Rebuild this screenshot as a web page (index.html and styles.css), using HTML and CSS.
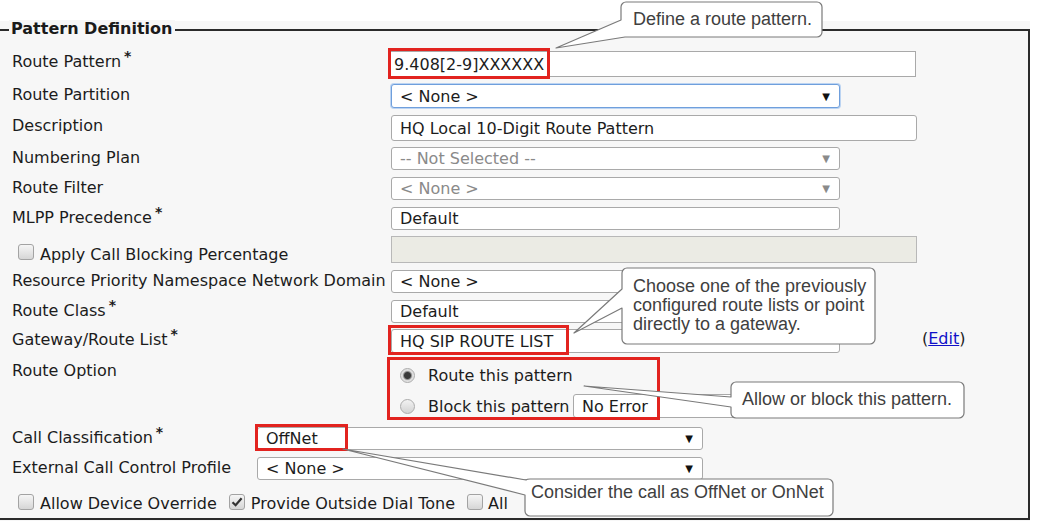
FILE: index.html
```html
<!DOCTYPE html>
<html>
<head>
<meta charset="utf-8">
<link rel="stylesheet" href="styles.css">
</head>
<body>
<div class="page">
  <div class="panel">
    <div class="frame">
      <div class="legend">Pattern Definition</div>
      <div class="form">
        <div class="row h33">
          <div class="label">Route Pattern<span class="req">*</span></div>
          <div class="field wide tall rp">9.408[2-9]XXXXXX</div>
        </div>
        <div class="row h31">
          <div class="label">Route Partition</div>
          <div class="field sel focus h24"><span>&lt; None &gt;</span><span class="arrow">&#9660;</span></div>
        </div>
        <div class="row h32">
          <div class="label">Description</div>
          <div class="field wide tall">HQ Local 10-Digit Route Pattern</div>
        </div>
        <div class="row h30">
          <div class="label">Numbering Plan</div>
          <div class="field sel disabled"><span>-- Not Selected --</span><span class="arrow">&#9660;</span></div>
        </div>
        <div class="row h30">
          <div class="label">Route Filter</div>
          <div class="field sel disabled"><span>&lt; None &gt;</span><span class="arrow">&#9660;</span></div>
        </div>
        <div class="row h29">
          <div class="label">MLPP Precedence<span class="req">*</span></div>
          <div class="field">Default</div>
        </div>
        <div class="row h34">
          <div class="label check-label"><span class="cb"></span><span class="cb-text">Apply Call Blocking Percentage</span></div>
          <div class="field wide h27 inactive"></div>
        </div>
        <div class="row h30">
          <div class="label">Resource Priority Namespace Network Domain</div>
          <div class="field"><span>&lt; None &gt;</span></div>
        </div>
        <div class="row h29">
          <div class="label">Route Class<span class="req">*</span></div>
          <div class="field"><span>Default</span></div>
        </div>
        <div class="row h31">
          <div class="label">Gateway/Route List<span class="req">*</span></div>
          <div class="field h24"><span>HQ SIP ROUTE LIST</span></div>
          <div class="edit">(<a href="#">Edit</a>)</div>
        </div>
        <div class="row h67">
          <div class="label">Route Option</div>
          <div class="options">
            <div class="opt"><span class="radio on"></span><span>Route this pattern</span></div>
            <div class="opt"><span class="radio"></span><span>Block this pattern</span><div class="field noerr h24"><span>No Error</span></div></div>
          </div>
        </div>
        <div class="row h30">
          <div class="label short">Call Classification<span class="req">*</span></div>
          <div class="field sel mid"><span>OffNet</span><span class="arrow">&#9660;</span></div>
        </div>
        <div class="row h31">
          <div class="label short">External Call Control Profile</div>
          <div class="field sel mid"><span>&lt; None &gt;</span><span class="arrow">&#9660;</span></div>
        </div>
        <div class="row checks">
          <span class="cb"></span><span class="cb-text">Allow Device Override</span>
          <span class="cb on"><svg viewBox="0 0 16 16" width="16" height="16"><path d="M3.5 8.2 L6.6 11.2 L12.6 4.2" fill="none" stroke="#333" stroke-width="2.2"/></svg></span><span class="cb-text">Provide Outside Dial Tone</span>
          <span class="cb"></span><span class="cb-text clip">All</span>
        </div>
      </div>
    </div>
  </div>

  <div class="hl hl-rp"></div>
  <div class="hl hl-gw"></div>
  <div class="hl hl-opt"></div>
  <div class="hl hl-cc"></div>

  <svg class="callouts" width="1052" height="521" viewBox="0 0 1052 521">
    <g fill="#ffffff" stroke="#7a7a7a" stroke-width="1.2" stroke-linejoin="round">
      <path d="M626 2 H817 A5 5 0 0 1 822 7 V32 A5 5 0 0 1 817 37 H625 L556 48 L621 20 V7 A5 5 0 0 1 626 2 Z"/>
      <path d="M627 268 H870 A5 5 0 0 1 875 273 V339 A5 5 0 0 1 870 344 H627 A5 5 0 0 1 622 339 V308 L574 333 L622 289 V273 A5 5 0 0 1 627 268 Z"/>
      <path d="M736 382 H959 A5 5 0 0 1 964 387 V413 A5 5 0 0 1 959 418 H736 A5 5 0 0 1 731 413 V407 L584 386 L731 397 V387 A5 5 0 0 1 736 382 Z"/>
      <path d="M530 479 H828 A5 5 0 0 1 833 484 V511 A5 5 0 0 1 828 516 H530 A5 5 0 0 1 525 511 V495 L343 449 L526 480 Q527 479 530 479 Z"/>
    </g>
  </svg>
  <div class="ct ct1">Define a route pattern.</div>
  <div class="ct ct2">Choose one of the previously<br>configured route lists or point<br>directly to a gateway.</div>
  <div class="ct ct3">Allow or block this pattern.</div>
  <div class="ct ct4">Consider the call as OffNet or OnNet</div>
</div>
</body>
</html>
```

FILE: styles.css
```css
html, body {
  margin: 0;
  padding: 0;
  background: #ffffff;
}

.page {
  position: relative;
  width: 1052px;
  height: 521px;
  overflow: hidden;
  font-family: "DejaVu Sans", Verdana, sans-serif;
  font-size: 16px;
  color: #1c1c1c;
}

.panel {
  margin-top: 21px;
  width: 1030px;
  height: 500px;
  padding-top: 8px;
  box-sizing: border-box;
  background: #f7f7f7;
}

.frame {
  position: relative;
  height: 491px;
  box-sizing: border-box;
  border-top: 2px solid #2b2b2b;
  border-right: 2px solid #2b2b2b;
  border-bottom: 2px solid #2b2b2b;
}

.legend {
  position: absolute;
  top: -11px;
  left: 9px;
  padding: 0 3px 0 2px;
  background: #f7f7f7;
  font-weight: bold;
  line-height: 18px;
  color: #1a1a1a;
}

.form {
  padding-top: 17px;
}

.row {
  display: flex;
  align-items: flex-start;
}

.h29 { height: 29px; }
.h30 { height: 30px; }
.h31 { height: 31px; }
.h32 { height: 32px; }
.h33 { height: 33px; }
.h34 { height: 34px; }
.h67 { height: 67px; }

.label {
  flex: 0 0 391px;
  box-sizing: border-box;
  padding-left: 12px;
  padding-top: 5px;
  line-height: 17px;
  white-space: nowrap;
}

.label.short {
  flex-basis: 257px;
}

.req {
  font-size: 14px;
  font-weight: bold;
  position: relative;
  top: -6px;
  margin-left: 3px;
}

.check-label {
  display: flex;
  align-items: center;
  padding-left: 18px;
  padding-top: 8px;
  gap: 6px;
}

.check-label .cb-text {
  padding-top: 5px;
}

.field {
  margin-top: 3px;
  width: 449px;
  height: 23px;
  box-sizing: border-box;
  border: 1px solid #a9a9a9;
  border-radius: 3px;
  background: #ffffff;
  display: flex;
  align-items: center;
  justify-content: space-between;
  padding: 0 8px;
  white-space: nowrap;
  line-height: 17px;
}

.field.wide {
  width: 526px;
}

.field.tall {
  height: 26px;
}

.field.rp {
  margin-left: -1px;
  padding-left: 3px;
  border-radius: 0;
}

.h24 { height: 24px; }
.h27 { height: 27px; }

.field.mid {
  width: 446px;
}

.field.inactive {
  background: #ebebe4;
  border-color: #b8b8b8;
  border-radius: 0;
}

.field.focus {
  border-color: #6f9fdc;
  box-shadow: 0 0 0 1px #bcd4f2;
}

.field.disabled {
  color: #8a8a8a;
}

.arrow {
  font-size: 10px;
  color: #111;
  padding-right: 1px;
}

.field.disabled .arrow {
  color: #8a8a8a;
}

.edit {
  margin-left: 82px;
  padding-top: 4px;
  line-height: 17px;
}

.edit a {
  color: #1010c8;
  text-decoration: underline;
}

.options {
  width: 449px;
  display: flex;
  flex-direction: column;
  gap: 7px;
  padding-top: 6px;
}

.opt {
  display: flex;
  align-items: center;
  height: 24px;
  white-space: nowrap;
}

.opt .radio {
  margin-left: 9px;
  margin-right: 13px;
}

.field.noerr {
  margin-top: 0;
  margin-left: auto;
  width: 267px;
}

.radio {
  width: 15px;
  height: 15px;
  box-sizing: border-box;
  border-radius: 50%;
  border: 1px solid #ababab;
  background: linear-gradient(#f2f2f2, #d3d3d3);
  display: inline-block;
  flex: none;
}

.radio.on {
  background: radial-gradient(circle, #3a3a3a 0, #3a3a3a 3px, #8f8f8f 4px, #d9d9d9 5px, #ececec 7px);
}

.cb {
  width: 16px;
  height: 16px;
  box-sizing: border-box;
  border: 1px solid #a3a3a3;
  border-radius: 3px;
  background: linear-gradient(#f6f6f6, #d6d6d6);
  display: inline-block;
  flex: none;
  position: relative;
}

.cb svg {
  position: absolute;
  left: -1px;
  top: -1px;
}

.checks {
  height: 34px;
  width: 511px;
  overflow: hidden;
  align-items: center;
  padding-left: 18px;
  box-sizing: border-box;
  white-space: nowrap;
}

.checks .cb-text {
  margin-left: 6px;
  margin-right: 12px;
  line-height: 17px;
  padding-top: 3px;
}

.checks .cb-text.clip {
  margin-left: 5px;
  margin-right: 0;
}

.hl {
  position: absolute;
  box-sizing: border-box;
  border: 3px solid #e2231f;
}

.hl-rp { left: 388px; top: 48px; width: 162px; height: 31px; }
.hl-gw { left: 388px; top: 325px; width: 181px; height: 30px; }
.hl-opt { left: 387px; top: 357px; width: 273px; height: 63px; }
.hl-cc { left: 255px; top: 424px; width: 93px; height: 27px; }

.callouts {
  position: absolute;
  left: 0;
  top: 0;
}

.ct {
  position: absolute;
  font-family: "Liberation Sans", Arial, sans-serif;
  font-size: 18px;
  line-height: 19px;
  color: #404040;
  white-space: nowrap;
}

.ct1 { left: 633px; top: 10px; }
.ct2 { left: 633px; top: 277px; }
.ct3 { left: 742px; top: 390px; }
.ct4 { left: 531px; top: 483px; }
```
